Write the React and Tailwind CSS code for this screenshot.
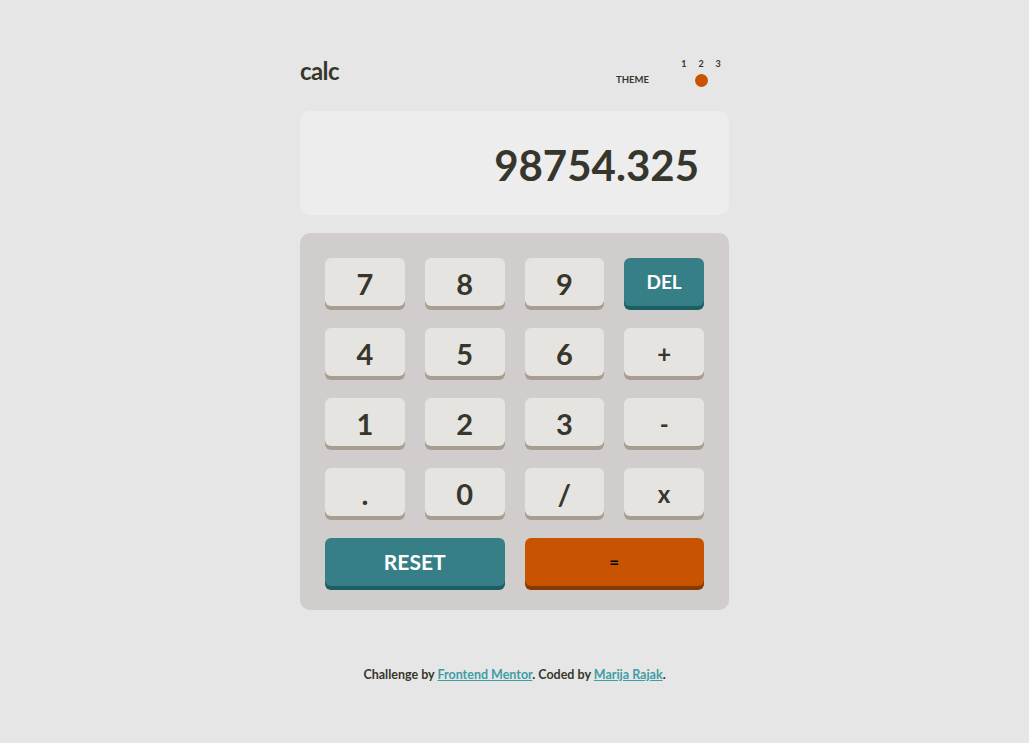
import React from 'react';

const keys = [
    {label: '7'}, {label: '8'}, {label: '9'}, {label: 'DEL', kind: 'blue'},
    {label: '4'}, {label: '5'}, {label: '6'}, {label: '+', small: true},
    {label: '1'}, {label: '2'}, {label: '3'}, {label: '-', small: true},
    {label: '.'}, {label: '0'}, {label: '/'}, {label: 'x', small: true},
];

const Key = ({label, kind, small, wide}) => {
    if (kind === 'blue') {
        return (
            <button className={`h-12 rounded-md bg-[#377f86] shadow-[0_4px_0_#1b5f65] text-white font-bold ${wide ? 'col-span-2 text-[21px]' : 'text-[19px]'}`}>
                {label}
            </button>
        );
    }
    if (kind === 'orange') {
        return (
            <button className="col-span-2 h-12 rounded-md bg-[#c85402] shadow-[0_4px_0_#873901] text-black font-bold text-[17px]">
                {label}
            </button>
        );
    }
    return (
        <button className={`h-12 rounded-md bg-[#e5e4e1] shadow-[0_4px_0_#a79e91] text-[#36362c] font-bold ${small ? 'text-[24px]' : 'text-[29px]'} pt-1`}>
            {label}
        </button>
    );
};

const App = () => {
    return (
        <div className="min-h-screen bg-[#e6e6e6] text-[#36362c] font-['Lato','Noto_Sans',sans-serif] pt-[58px]">
            <div className="w-[429px] mx-auto">
                <div className="flex justify-between items-end h-[30px] pr-[6px]">
                    <h1 className="text-[24px] font-bold leading-none pb-[5px] tracking-tight">calc</h1>
                    <div className="flex items-end gap-[30px]">
                        <span className="text-[9.5px] font-bold leading-none pb-[4px]">THEME</span>
                        <div className="flex flex-col items-center">
                            <div className="flex gap-[12px] text-[9px] font-bold leading-none pb-[4px] px-[1px]">
                                <span>1</span><span>2</span><span>3</span>
                            </div>
                            <div className="w-[44px] h-[16px] rounded-full flex items-center justify-center">
                                <span className="w-[13px] h-[13px] rounded-full bg-[#c85402]"></span>
                            </div>
                        </div>
                    </div>
                </div>

                <div className="mt-[23px] h-[104px] rounded-[10px] bg-[#ededed] flex items-center justify-end px-[30px]">
                    <span className="text-[42px] font-bold leading-none pt-1">98754.325</span>
                </div>

                <div className="mt-[18px] rounded-[10px] bg-[#d2cdcd] px-[25px] pt-[25px] pb-[24px] grid grid-cols-4 gap-x-5 gap-y-[22px]">
                    {keys.map((k, i) => <Key key={i} {...k}/>)}
                    <Key label="RESET" kind="blue" wide/>
                    <Key label="=" kind="orange"/>
                </div>

                <p className="mt-[56px] text-center text-[12.5px] font-bold">
                    Challenge by <a href="#" className="text-[#3e9ea5] underline">Frontend Mentor</a>. Coded by <a href="#" className="text-[#3e9ea5] underline">Marija Rajak</a>.
                </p>
            </div>
        </div>
    );
};

export default App;
